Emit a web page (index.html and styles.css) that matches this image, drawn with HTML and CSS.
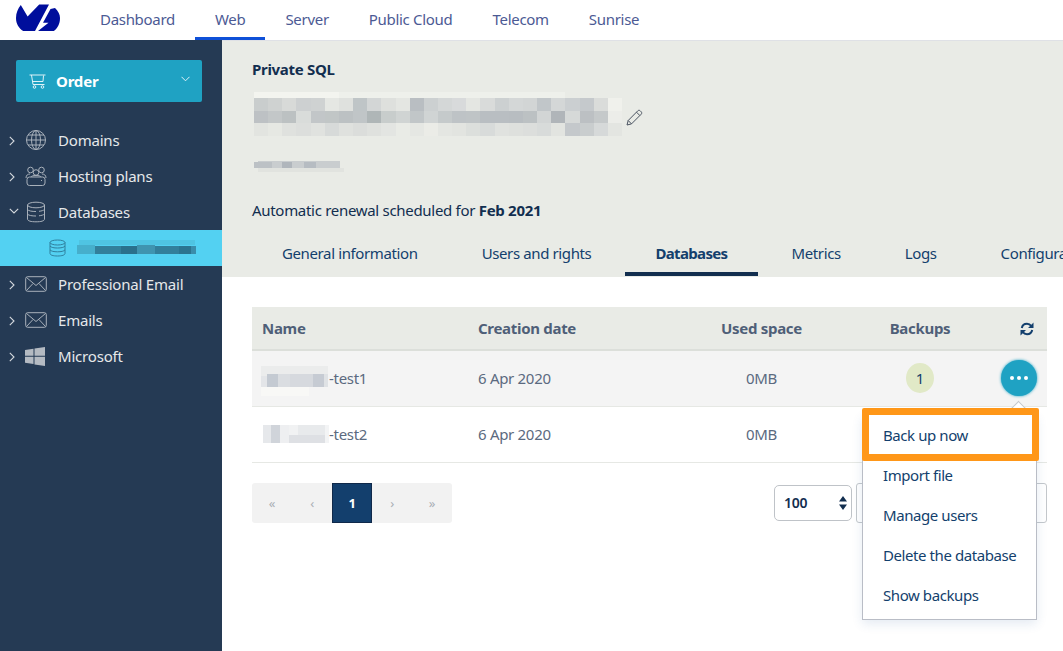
FILE: index.html
```html
<!DOCTYPE html>
<html lang="en">
<head>
  <meta charset="UTF-8" />
  <meta name="viewport" content="width=device-width, initial-scale=1.0" />
  <title>Private SQL</title>
  <link rel="stylesheet" href="styles.css">
</head>
<body>
  <!-- Top navigation -->
  <header class="topbar">
    <svg class="logo" width="46" height="28" viewBox="16 4 46 28">
      <path fill="#000e9c" d="M20.800 5 27.600 16.600 39.200 4.400H49L35 31H23.200C19 28.500 16 24 16 18 16 13 18 8.500 20.800 5Z"/>
      <path fill="#000e9c" d="M55 8C58 11 60 14.200 60 18 60 24 57.500 28.500 53.800 31H38L48.500 22.800H43L50.500 9Z"/>
    </svg>
    <nav class="topnav">
      <a>Dashboard</a>
      <a class="active">Web</a>
      <a>Server</a>
      <a>Public Cloud</a>
      <a>Telecom</a>
      <a>Sunrise</a>
    </nav>
  </header>

  <div class="app">
    <!-- Sidebar -->
    <aside class="sidebar">
      <div class="order">
        <svg class="order-cart" width="17" height="15" viewBox="0 0 17 15">
          <path d="M.5 1H16.500M2.500 1 4 10.500H15.500M14.500 1.500 14 7.500H3.500" />
          <circle cx="5.500" cy="13" r="1.300" />
          <circle cx="13.500" cy="13" r="1.300" />
        </svg>
        <b>Order</b>
        <svg class="order-caret" width="9" height="6" viewBox="0 0 9 6"><path d="M.5 .8 4.500 4.800 8.500 .8"/></svg>
      </div>

      <ul class="tree">
        <li>
          <svg class="chev" width="6" height="10" viewBox="0 0 6 10"><path d="M.8 .8 5 5 .8 9.200"/></svg>
          <svg class="ico" width="22" height="22" viewBox="0 0 22 22">
            <circle cx="11" cy="11" r="9.500"/>
            <ellipse cx="11" cy="11" rx="4.500" ry="9.500"/>
            <path d="M11 1.500V20.500M1.500 11H20.500M3 6H19M3 16H19"/>
          </svg>
          Domains
        </li>
        <li>
          <svg class="chev" width="6" height="10" viewBox="0 0 6 10"><path d="M.8 .8 5 5 .8 9.200"/></svg>
          <svg class="ico" width="22" height="22" viewBox="0 0 22 22">
            <circle cx="5.500" cy="5" r="2.800"/>
            <circle cx="16.500" cy="5" r="2.800"/>
            <circle cx="11" cy="7.500" r="2.800"/>
            <path d="M1 13C1 10 3 9 5 9M21 13C21 10 19 9 17 9M6 12C6.500 11 8 10.500 11 10.500S15.500 11 16 12"/>
            <rect x="2" y="12" width="18" height="8.500" rx="2.500"/>
            <path d="M16 15.500H17"/>
          </svg>
          Hosting plans
        </li>
        <li>
          <svg class="chev" width="10" height="6" viewBox="0 0 10 6"><path d="M.8 .8 5 5 9.200 .8"/></svg>
          <svg class="ico" width="22" height="22" viewBox="0 0 22 22">
            <ellipse cx="11" cy="4" rx="8.500" ry="2.800"/>
            <path d="M2.500 4V18C2.500 20 6 20.800 11 20.800S19.500 20 19.500 18V4M2.500 8.500C3.500 10 7 10.500 11 10.500M2.500 13C3.500 14.500 7 15 11 15M19.500 8.500C18.500 9.500 16.500 10 14 10.300M19.500 13C18.500 14 16.500 14.500 14 14.800"/>
          </svg>
          Databases
        </li>
        <li class="sub">
          <svg class="ico" width="17" height="18" viewBox="0 0 17 18">
            <ellipse cx="8.500" cy="3.500" rx="7.500" ry="2.500"/>
            <path d="M1 3.500V14.500C1 16 4 17 8.500 17S16 16 16 14.500V3.500M1 7C2 8.500 5 9 8.500 9S15 8.500 16 7M1 10.800C2 12.300 5 12.800 8.500 12.800S15 12.300 16 10.800"/>
          </svg>
          <svg class="blur" width="120" height="16" viewBox="0 0 120 16">
            <rect x="2" y="0" width="116" height="5" fill="#4fc4e2"/>
            <rect x="0" y="5" width="18" height="9" fill="#46afcc"/>
            <rect x="18" y="6" width="26" height="8" fill="#327f9b"/>
            <rect x="44" y="6" width="16" height="8" fill="#2a708c"/>
            <rect x="60" y="5" width="18" height="9" fill="#3f94b0"/>
            <rect x="78" y="6" width="24" height="8" fill="#327f9b"/>
            <rect x="102" y="6" width="12" height="8" fill="#2b7490"/>
            <rect x="114" y="6" width="5" height="8" fill="#3a8dab"/>
          </svg>
        </li>
        <li>
          <svg class="chev" width="6" height="10" viewBox="0 0 6 10"><path d="M.8 .8 5 5 .8 9.200"/></svg>
          <svg class="ico" width="22" height="16" viewBox="0 0 22 16">
            <rect x=".7" y=".7" width="20.600" height="14.600" rx="2"/>
            <path d="M1.500 1.500 11 9.500 20.500 1.500M1.500 14.500 8 7.500M20.500 14.500 14 7.500"/>
          </svg>
          Professional Email
        </li>
        <li>
          <svg class="chev" width="6" height="10" viewBox="0 0 6 10"><path d="M.8 .8 5 5 .8 9.200"/></svg>
          <svg class="ico" width="22" height="16" viewBox="0 0 22 16">
            <rect x=".7" y=".7" width="20.600" height="14.600" rx="2"/>
            <path d="M1.500 1.500 11 9.500 20.500 1.500M1.500 14.500 8 7.500M20.500 14.500 14 7.500"/>
          </svg>
          Emails
        </li>
        <li>
          <svg class="chev" width="6" height="10" viewBox="0 0 6 10"><path d="M.8 .8 5 5 .8 9.200"/></svg>
          <svg class="ico ico-fill" width="20" height="19" viewBox="0 0 20 19">
            <path d="M0 3 8.500 1.700V8.800H0ZM9.500 1.500 20 0V8.800H9.500ZM0 9.800H8.500V17L0 15.800ZM9.500 9.800H20V19L9.500 17.400Z"/>
          </svg>
          Microsoft
        </li>
      </ul>
    </aside>

    <main class="main">
      <!-- Header of the service -->
      <section class="head">
        <h2>Private SQL</h2>
        <div class="head-name">
          <svg class="blur" width="368" height="50" viewBox="0 0 26 4" preserveAspectRatio="none" shape-rendering="crispEdges">
            <g fill="#f3f4ef">
              <rect x="0" y="0" width="6" height=".5"/>
            </g>
            <g fill="#eef0eb">
              <rect x="6" y="0" width="16" height=".5"/>
            </g>
            <rect x="0" y=".5" width="1" height="1" fill="#c9cdcd"/><rect x="1" y=".5" width="1" height="1" fill="#cfd2d1"/><rect x="2" y=".5" width="1" height="1" fill="#d8dad8"/><rect x="3" y=".5" width="1" height="1" fill="#cdd0d1"/><rect x="4" y=".5" width="1" height="1" fill="#cfd2d2"/><rect x="5" y=".5" width="1" height="1" fill="#e5e7e3"/><rect x="6" y=".5" width="1" height="1" fill="#dfe1de"/><rect x="7" y=".5" width="1" height="1" fill="#bfc5c7"/><rect x="8" y=".5" width="1" height="1" fill="#d3d6d6"/><rect x="9" y=".5" width="1" height="1" fill="#dee0dd"/><rect x="10" y=".5" width="1" height="1" fill="#e4e6e2"/><rect x="11" y=".5" width="1" height="1" fill="#b9bec2"/><rect x="12" y=".5" width="1" height="1" fill="#ccd0d1"/><rect x="13" y=".5" width="1" height="1" fill="#d4d7d7"/><rect x="14" y=".5" width="1" height="1" fill="#d8dadb"/><rect x="15" y=".5" width="1" height="1" fill="#e4e6e2"/><rect x="16" y=".5" width="1" height="1" fill="#d9dbda"/><rect x="17" y=".5" width="1" height="1" fill="#ccd0d1"/><rect x="18" y=".5" width="1" height="1" fill="#d4d7d7"/><rect x="19" y=".5" width="1" height="1" fill="#d2d5d5"/><rect x="20" y=".5" width="1" height="1" fill="#c1c6c9"/><rect x="21" y=".5" width="1" height="1" fill="#d4d7d7"/><rect x="22" y=".5" width="1" height="1" fill="#cbcfd1"/><rect x="23" y=".5" width="1" height="1" fill="#c5c9cc"/><rect x="24" y=".5" width="1" height="1" fill="#dadcda"/><rect x="25" y=".5" width="1" height="1" fill="#f0f1ec"/>
            <rect x="0" y="1.500" width="1" height="1" fill="#bdc1c4"/><rect x="1" y="1.500" width="1" height="1" fill="#c3c7c8"/><rect x="2" y="1.500" width="1" height="1" fill="#bcc1c2"/><rect x="3" y="1.500" width="1" height="1" fill="#d9dcda"/><rect x="4" y="1.500" width="1" height="1" fill="#c2c6c8"/><rect x="5" y="1.500" width="1" height="1" fill="#c1c6c6"/><rect x="6" y="1.500" width="1" height="1" fill="#bcc1c3"/><rect x="7" y="1.500" width="1" height="1" fill="#c0c5c7"/><rect x="8" y="1.500" width="1" height="1" fill="#afb6b7"/><rect x="9" y="1.500" width="1" height="1" fill="#c8cdcc"/><rect x="10" y="1.500" width="1" height="1" fill="#d0d4d3"/><rect x="11" y="1.500" width="1" height="1" fill="#c1c6c8"/><rect x="12" y="1.500" width="1" height="1" fill="#d0d4d4"/><rect x="13" y="1.500" width="1" height="1" fill="#c5cacb"/><rect x="14" y="1.500" width="1" height="1" fill="#bec3c6"/><rect x="15" y="1.500" width="1" height="1" fill="#bfc4c6"/><rect x="16" y="1.500" width="1" height="1" fill="#b9bec2"/><rect x="17" y="1.500" width="1" height="1" fill="#b9bec2"/><rect x="18" y="1.500" width="1" height="1" fill="#b8bdc1"/><rect x="19" y="1.500" width="1" height="1" fill="#bcc1c3"/><rect x="20" y="1.500" width="1" height="1" fill="#d2d5d5"/><rect x="21" y="1.500" width="1" height="1" fill="#b0b5b9"/><rect x="22" y="1.500" width="1" height="1" fill="#d6d9d8"/><rect x="23" y="1.500" width="1" height="1" fill="#bcc0c3"/><rect x="24" y="1.500" width="1" height="1" fill="#c5c9ca"/><rect x="25" y="1.500" width="1" height="1" fill="#ecede9"/>
            <rect x="0" y="2.500" width="1" height="1" fill="#e2e4e0"/><rect x="1" y="2.500" width="1" height="1" fill="#e6e8e3"/><rect x="2" y="2.500" width="1" height="1" fill="#dfe1de"/><rect x="3" y="2.500" width="1" height="1" fill="#dcdedc"/><rect x="4" y="2.500" width="1" height="1" fill="#e0e2df"/><rect x="5" y="2.500" width="1" height="1" fill="#d7dad9"/><rect x="6" y="2.500" width="1" height="1" fill="#dfe1de"/><rect x="7" y="2.500" width="1" height="1" fill="#dbdddb"/><rect x="8" y="2.500" width="1" height="1" fill="#dfe1de"/><rect x="9" y="2.500" width="1" height="1" fill="#e3e5e2"/><rect x="10" y="2.500" width="1" height="1" fill="#e9ebe6"/><rect x="11" y="2.500" width="1" height="1" fill="#e5e7e3"/><rect x="12" y="2.500" width="1" height="1" fill="#ebece7"/><rect x="13" y="2.500" width="1" height="1" fill="#e4e6e2"/><rect x="14" y="2.500" width="1" height="1" fill="#e2e4e0"/><rect x="15" y="2.500" width="1" height="1" fill="#dcdfdc"/><rect x="16" y="2.500" width="1" height="1" fill="#d8dbda"/><rect x="17" y="2.500" width="1" height="1" fill="#e0e2df"/><rect x="18" y="2.500" width="1" height="1" fill="#dee0dd"/><rect x="19" y="2.500" width="1" height="1" fill="#dcdedc"/><rect x="20" y="2.500" width="1" height="1" fill="#d8dbda"/><rect x="21" y="2.500" width="1" height="1" fill="#e2e4e0"/><rect x="22" y="2.500" width="1" height="1" fill="#c4c8cb"/><rect x="23" y="2.500" width="1" height="1" fill="#c9cdce"/><rect x="24" y="2.500" width="1" height="1" fill="#d6d9d9"/><rect x="25" y="2.500" width="1" height="1" fill="#e3e5e1"/>
          </svg>
          <svg class="pencil" width="17" height="17" viewBox="0 0 17 17">
            <path d="M1 16 2.200 11.500 11.800 1.800C12.500 1.100 13.500 1.100 14.200 1.800L15.200 2.800C15.900 3.500 15.900 4.500 15.200 5.200L5.500 14.900ZM2.200 11.500 5.500 14.900M10.500 3.200 13.800 6.500"/>
          </svg>
        </div>
        <svg class="blur head-sub" width="94" height="16" viewBox="0 0 94 16">
          <rect x="6" y="3" width="82" height="7" fill="#c9cdcf"/>
          <rect x="2" y="4" width="18" height="6" fill="#bcc1c5"/>
          <rect x="30" y="4" width="10" height="6" fill="#b0b6bc"/>
          <rect x="52" y="4" width="12" height="6" fill="#b6bcc2"/>
          <rect x="6" y="10" width="86" height="4" fill="#e1e3df"/>
        </svg>
        <p class="renewal">Automatic renewal scheduled for <b>Feb 2021</b></p>
        <div class="tabs">
          <a>General information</a>
          <a>Users and rights</a>
          <a class="active">Databases</a>
          <a>Metrics</a>
          <a>Logs</a>
          <a>Configuration</a>
        </div>
      </section>

      <!-- Databases list -->
      <section class="content">
        <table class="dbs">
          <thead>
            <tr>
              <th class="c-name">Name</th>
              <th class="c-date">Creation date</th>
              <th class="c-used">Used space</th>
              <th class="c-backups">Backups</th>
              <th class="c-act">
                <svg class="refresh" width="14" height="14" viewBox="0 0 14 14">
                  <path fill="none" stroke="#133f6d" stroke-width="2" d="M1.800 6C2.300 3.500 4.400 1.800 7 1.800 8.800 1.800 10.300 2.700 11.300 4M12.200 8C11.700 10.500 9.600 12.200 7 12.200 5.200 12.200 3.700 11.300 2.700 10"/>
                  <path fill="#133f6d" d="M13.500 .5V6H8ZM.5 13.500V8H6Z"/>
                </svg>
              </th>
            </tr>
          </thead>
          <tbody>
            <tr class="hover">
              <td class="c-name">
                <div class="db-name">
                  <svg class="blur first" width="69" height="30" viewBox="0 0 69 30">
                    <rect x="1" y="0" width="67" height="10" fill="#ebecec"/>
                    <rect x="1" y="10" width="6" height="11" fill="#e3e5e8"/>
                    <rect x="7" y="8" width="11" height="13" fill="#c4cad2"/>
                    <rect x="18" y="8" width="12" height="13" fill="#dadde1"/>
                    <rect x="30" y="8" width="23" height="13" fill="#d6d9de"/>
                    <rect x="53" y="8" width="11" height="13" fill="#c6cbd3"/>
                    <rect x="64" y="8" width="4" height="13" fill="#dfe2e5"/>
                    <rect x="1" y="21" width="48" height="9" fill="#f8f8f6"/>
                  </svg>-test1
                </div>
              </td>
              <td class="c-date">6 Apr 2020</td>
              <td class="c-used">0MB</td>
              <td class="c-backups"><span class="count">1</span></td>
              <td class="c-act"><span class="dots"><i></i><i></i><i></i></span></td>
            </tr>
            <tr>
              <td class="c-name">
                <div class="db-name">
                  <svg class="blur second" width="66" height="18" viewBox="0 0 66 18">
                    <rect x="0" y="0" width="8" height="18" fill="#e6e8eb"/>
                    <rect x="8" y="0" width="9" height="18" fill="#d0d4da"/>
                    <rect x="17" y="0" width="9" height="18" fill="#eeeff1"/>
                    <rect x="26" y="0" width="9" height="18" fill="#f1f2f3"/>
                    <rect x="35" y="0" width="27" height="10" fill="#e8eaec"/>
                    <rect x="26" y="10" width="36" height="8" fill="#dee0e4"/>
                    <rect x="62" y="0" width="4" height="18" fill="#f3f4f5"/>
                  </svg>-test2
                </div>
              </td>
              <td class="c-date">6 Apr 2020</td>
              <td class="c-used">0MB</td>
              <td class="c-backups"></td>
              <td class="c-act"></td>
            </tr>
          </tbody>
        </table>

        <div class="pager-row">
          <div class="pager">
            <span>«</span>
            <span>‹</span>
            <span class="current">1</span>
            <span>›</span>
            <span>»</span>
          </div>
          <div class="pager-tools">
            <div class="select">100
              <svg width="8" height="14" viewBox="0 0 8 14"><path fill="#122e4f" d="M4 0 8 5.500H0ZM4 14 0 8.500H8Z"/></svg>
            </div>
            <div class="page-input"></div>
          </div>
        </div>
      </section>
    </main>
  </div>

  <!-- Action menu of the first row -->
  <div class="menu">
    <a>Back up now</a>
    <a>Import file</a>
    <a>Manage users</a>
    <a>Delete the database</a>
    <a>Show backups</a>
  </div>
  <div class="marker"></div>
</body>
</html>
```
FILE: styles.css
```css
* {
  box-sizing: border-box;
}
body {
  position: relative;
  width: 1063px;
  height: 651px;
  margin: 0;
  overflow: hidden;
  background: #fff;
  color: #122e4f;
  font-family: "Noto Sans", "Open Sans", sans-serif;
  font-size: 15px;
  letter-spacing: -0.3px;
}
.blur {
  filter: blur(0.5px);
}

.topbar {
  display: flex;
  height: 40px;
  background: #fff;
}
.logo {
  margin: 4px 0 0 16px;
}
.topnav {
  display: flex;
  margin-left: 18px;
}
.topnav a {
  height: 40px;
  padding: 0 20px;
  line-height: 39px;
  color: #4c5a94;
}
.topnav a.active {
  border-bottom: 3px solid #0f50d8;
}

.app {
  display: flex;
  height: 611px;
}
.sidebar {
  flex: 0 0 222px;
  padding-top: 20px;
  background: #253a54;
  color: #e6e8ea;
  letter-spacing: -0.2px;
}
.order {
  position: relative;
  display: flex;
  align-items: center;
  height: 42px;
  margin: 0 20px 0 16px;
  padding-left: 13px;
  border-radius: 2px;
  background: #1fa2c3;
  color: #fff;
}
.order b {
  margin-left: 10px;
}
.order-cart path,
.order-cart circle,
.order-caret path {
  fill: none;
  stroke: #dff3f8;
  stroke-width: 1;
}
.order-caret {
  position: absolute;
  top: 16px;
  right: 12px;
}
.tree {
  margin: 20px 0 0;
  padding: 0;
  list-style: none;
}
.tree li {
  position: relative;
  display: flex;
  align-items: center;
  height: 36px;
  padding-left: 58px;
}
.chev {
  position: absolute;
  left: 9px;
  top: 14px;
  fill: none;
  stroke: #d5d9de;
  stroke-width: 1.1;
}
.ico {
  position: absolute;
  left: 25px;
  fill: none;
  stroke: #a9b1bb;
  stroke-width: 1;
}
.ico-fill {
  fill: #b4bac2;
  stroke: none;
}
.tree li.sub {
  background: #53d1f2;
}
.sub .ico {
  left: 49px;
  stroke: #2f7f9d;
}
.sub .blur {
  margin-left: 19px;
}

.main {
  flex: 1;
  min-width: 0;
  overflow: hidden;
}
.head {
  height: 237px;
  padding: 19px 0 0 30px;
  border-top: 1px solid #dfe1e6;
  background: #e9ebe6;
}
.head h2 {
  margin: 0;
  font-size: 15px;
  font-weight: 700;
  line-height: 18px;
}
.head-name {
  display: flex;
  align-items: center;
  margin: 14px 0 0 2px;
}
.pencil {
  margin-left: 4px;
  fill: none;
  stroke: #4a5361;
  stroke-width: 1;
}
.head-sub {
  display: block;
  margin-top: 16px;
}
.renewal {
  margin: 26px 0 0;
  line-height: 20px;
}
.tabs {
  display: flex;
  gap: 4px;
  margin-top: 9px;
  letter-spacing: -0.38px;
  white-space: nowrap;
}
.tabs a {
  height: 47px;
  padding: 0 30px;
  line-height: 48px;
  color: #133f6d;
}
.tabs a.active {
  font-weight: 700;
  letter-spacing: -0.65px;
  border-bottom: 4px solid #122e4f;
}

.content {
  padding: 30px 16px 0 30px;
}
.dbs {
  width: 795px;
  border-collapse: collapse;
  table-layout: fixed;
}
.dbs th {
  height: 43px;
  background: #e9ebe6;
  border-bottom: 2px solid #dcdfda;
  color: #4f5f78;
  font-weight: 700;
}
.dbs td {
  height: 56px;
  border-bottom: 1px solid #e6e8e4;
  color: #5b6a80;
}
.dbs .hover td {
  background: #f4f4f4;
}
.c-name {
  width: 216px;
  padding-left: 10px;
  text-align: left;
}
.c-date {
  width: 212px;
  padding-left: 10px;
  text-align: left;
}
.c-used {
  width: 163px;
  text-align: center;
}
.c-backups {
  width: 154px;
  text-align: center;
}
.c-act {
  padding-left: 11px;
  text-align: center;
}
.refresh {
  display: block;
  margin: 2px auto 0;
}
.db-name {
  display: flex;
  align-items: center;
}
.db-name .first {
  margin: 6px 0 0 -2px;
}
.db-name .second {
  margin-left: 1px;
}
.count {
  display: inline-block;
  width: 28px;
  height: 30px;
  border-radius: 50%;
  background: #e1e9c7;
  color: #133f6d;
  line-height: 30px;
}
.dots {
  display: inline-flex;
  align-items: center;
  justify-content: center;
  gap: 3px;
  width: 36px;
  height: 36px;
  margin: 0 0 0 -16px;
  border-radius: 50%;
  background: #1fa2c3;
  box-shadow: 0 0 3px #1fa2c3;
  vertical-align: middle;
}
.dots i {
  width: 4px;
  height: 4px;
  border-radius: 50%;
  background: #fff;
}

.pager-row {
  display: flex;
  justify-content: space-between;
  align-items: center;
  width: 795px;
  margin-top: 20px;
}
.pager {
  display: flex;
  height: 40px;
  border-radius: 3px;
  background: #f2f2f2;
  color: #a9aeb5;
  font-size: 13px;
}
.pager span {
  width: 40px;
  text-align: center;
  line-height: 40px;
}
.pager .current {
  background: #133f6d;
  border: 1px solid #10294a;
  color: #fff;
  font-weight: 700;
  line-height: 38px;
}
.pager-tools {
  display: flex;
  align-items: center;
  gap: 4px;
}
.select {
  display: flex;
  align-items: center;
  justify-content: space-between;
  width: 78px;
  height: 36px;
  padding: 0 4px 0 9px;
  border: 1px solid #bfc3c8;
  border-radius: 5px;
  background: #fff;
  color: #122e4f;
  font-size: 14px;
  font-weight: 600;
}
.page-input {
  width: 191px;
  height: 40px;
  border: 1px solid #c4c8cc;
  border-radius: 3px;
}

/* over the table */
.menu {
  position: absolute;
  left: 862px;
  top: 414px;
  width: 175px;
  height: 206px;
  border: 1px solid #b9bdc6;
  background: #fff;
  box-shadow: 0 4px 10px rgba(40, 90, 160, 0.12);
  letter-spacing: -0.42px;
}
.menu a {
  display: block;
  height: 40px;
  padding-left: 20px;
  line-height: 40px;
  color: #133f6d;
}
.menu::before {
  content: "";
  position: absolute;
  right: 12px;
  top: -12px;
  width: 10px;
  height: 10px;
  border-left: 1px solid #c4c8cc;
  border-top: 1px solid #c4c8cc;
  background: #fff;
  transform: rotate(45deg);
}
.marker {
  position: absolute;
  left: 862px;
  top: 408px;
  width: 177px;
  height: 53px;
  border: 7px solid #ff9718;
  border-radius: 2px;
}
```
